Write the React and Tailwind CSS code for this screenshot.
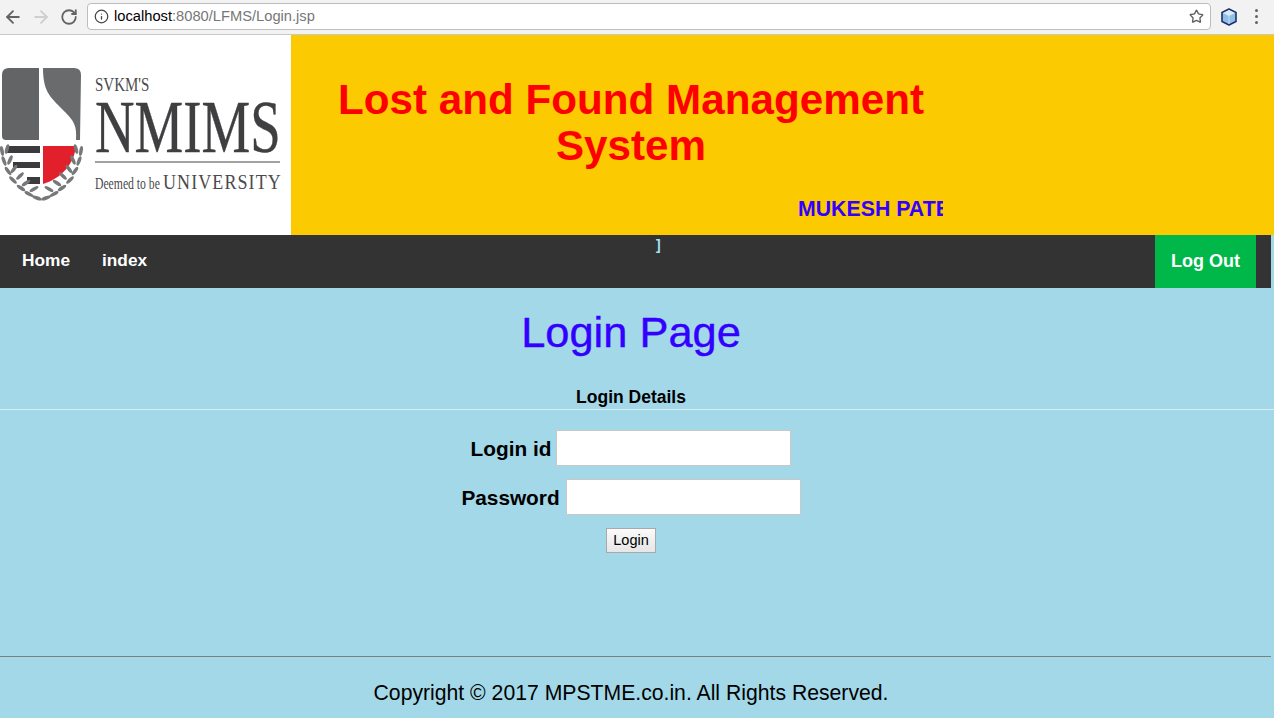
import React from "react";
import { ArrowLeft, ArrowRight, RotateCw, Info, Star } from "lucide-react";

const sans = "font-['Liberation_Sans',Arial,sans-serif]";

// laurel leaves of the crest, left side: [cx, cy, angle]
const leaves = [
  [2, 83, 80], [7, 81, 105], [4, 93, 70], [10, 92, 115], [8, 103, 55], [14, 101, 125],
  [13, 112, 45], [20, 108, 135], [21, 120, 35], [26, 115, 145], [29, 126, 28], [34, 121, 150], [37, 130, 20],
];

function Extension() {
  return (
    <svg width="18" height="18" viewBox="0 0 18 18">
      <path d="M9 1 16 4.5v9L9 17 2 13.5v-9z" fill="#8fbfe6" stroke="#1f2f6b" strokeWidth="1.6" strokeLinejoin="round" />
      <path d="M3 5 9 8l6-3-6-3z" fill="#d8ecf8" />
      <path d="M9 8v8" stroke="#c4ddf0" strokeWidth="1" />
    </svg>
  );
}

function Shield() {
  return (
    <svg width="86" height="134" viewBox="0 0 86 134" className="mt-[33px] shrink-0">
      <path d="M2 7Q2 0 9 0H39V72H6Q2 72 2 68z" fill="#636466" />
      <path d="M43 0H74Q81 0 81 7L80 72H76C77 58 74 53 65 44 52 30 43 26 43 0z" fill="#6a6b6d" />
      <path d="M7 78H40V85H7zM13 94H40V100H13zM27 109H40V116H27z" fill="#3b3b3d" />
      <path d="M43 78H76C74 96 62 110 43 116z" fill="#e2202c" />
      <g fill="#77787a">
        {leaves.map(([x, y, a], i) => (
          <g key={i}>
            <ellipse cx={x} cy={y} rx="5" ry="1.8" transform={`rotate(${a} ${x} ${y})`} />
            <ellipse cx={83 - x} cy={y} rx="5" ry="1.8" transform={`rotate(${-a} ${83 - x} ${y})`} />
          </g>
        ))}
      </g>
    </svg>
  );
}

function Logo() {
  return (
    <div className="flex h-full w-[291px] shrink-0 items-start bg-white">
      <Shield />
      <div className="ml-[9px] flex w-[186px] flex-col pt-[40px] font-['Liberation_Serif',serif] text-[#4a4a4c]">
        <span className="origin-left scale-x-[0.79] whitespace-nowrap text-[19px] leading-[20px]">SVKM'S</span>
        <span className="mt-[4px] origin-left scale-x-[0.73] whitespace-nowrap text-[75px] leading-[56px] text-[#3f3f41] [-webkit-text-stroke:0.4px_#3f3f41]">NMIMS</span>
        <div className="mt-[6px] h-[2px] w-[185px] bg-[#a0a1a3]" />
        <div className="mt-[9px] flex items-baseline whitespace-nowrap">
          <span className="w-[68px] origin-left scale-x-[0.73] text-[16px] leading-[20px]">Deemed to be</span>
          <span className="origin-left scale-x-[0.9] text-[20px] leading-[20px] tracking-[1.2px]">UNIVERSITY</span>
        </div>
      </div>
    </div>
  );
}

function Field({ label, gap }) {
  return (
    <div className={`flex items-center justify-center ${gap}`}>
      <label className="text-[20.8px] font-bold leading-[23px] text-black">{label}</label>
      <input className="h-[36px] w-[235px] border border-[#c8c8c8] bg-white outline-none" />
    </div>
  );
}

export default function App() {
  return (
    <div className={`flex h-[718px] w-[1274px] flex-col overflow-hidden bg-[#a3d8e9] ${sans}`}>
      {/* browser toolbar */}
      <div className="flex h-[35px] shrink-0 items-center border-b border-[#c9c9c9] bg-[#f2f2f2] pb-[1px] pl-[3px]">
        <ArrowLeft size={20} strokeWidth={2.2} className="text-[#636363]" />
        <ArrowRight size={20} strokeWidth={2.2} className="ml-[8px] text-[#cfcfcf]" />
        <RotateCw size={18} strokeWidth={2.4} className="ml-[9px] text-[#636363]" />
        <div className="ml-[9px] flex h-[27px] w-[1124px] items-center rounded-[4px] border border-[#bdbdbd] bg-white pl-[6px] pr-[6px]">
          <Info size={15} strokeWidth={2} className="text-[#444444]" />
          <span className="ml-[5px] text-[14.7px] text-black">localhost<span className="text-[#777777]">:8080/LFMS/Login.jsp</span></span>
          <Star size={15} strokeWidth={2.2} className="ml-auto text-[#5f5f5f]" />
        </div>
        <div className="ml-[9px]"><Extension /></div>
        <div className="ml-[17px] flex flex-col gap-[3px]">
          <span className="h-[3px] w-[3px] rounded-full bg-[#636363]" />
          <span className="h-[3px] w-[3px] rounded-full bg-[#636363]" />
          <span className="h-[3px] w-[3px] rounded-full bg-[#636363]" />
        </div>
      </div>

      {/* banner */}
      <header className="flex h-[200px] shrink-0 bg-[#fbca00]">
        <Logo />
        <div className="flex w-[680px] flex-col">
          <h1 className="mt-[42px] w-[680px] text-center text-[42.2px] font-bold leading-[46px] text-[#ff0000]">
            Lost and Found Management System
          </h1>
          <div className="ml-[507px] mt-[28px] w-[145px] overflow-hidden whitespace-nowrap text-[21.3px] font-bold leading-[25px] text-[#3300ff]">
            MUKESH PATEL
          </div>
        </div>
      </header>

      {/* nav */}
      <nav className="relative flex h-[53px] w-[1271px] shrink-0 items-center bg-[#333333] text-[17.3px] font-bold text-white">
        <a className="ml-[22px] pb-[1px]">Home</a>
        <a className="ml-[32px] pb-[1px]">index</a>
        <span className="absolute left-[656px] top-[0px] text-[14px] leading-[20px] font-bold text-[#a8e4f5]">]</span>
        <a className="ml-auto mr-[15px] flex h-full w-[101px] items-center justify-center bg-[#00b84a] pb-[1px] text-[18px]">Log Out</a>
      </nav>

      {/* content */}
      <main className="flex grow flex-col">
        <h2 className="mt-[20px] pr-[12px] text-center text-[43.4px] font-normal leading-[48px] text-[#3300ff] [-webkit-text-stroke:0.4px_#3300ff]">Login Page</h2>
        <h3 className="mt-[31px] pr-[12px] text-center text-[17.5px] font-bold leading-[20px] text-black">Login Details</h3>
        <div className="mt-[2px] h-[1px] bg-[#d9ecf2]" />
        <form className="mt-[20px] flex flex-col pr-[12px]">
          <Field label="Login id" gap="gap-[5px]" />
          <div className="mt-[13px]"><Field label="Password" gap="gap-[6px]" /></div>
          <button type="button" className="mx-auto mt-[13px] h-[25px] w-[50px] border border-[#a9a9a9] bg-gradient-to-b from-[#fafafa] to-[#e6e6e6] text-[14.5px] text-black">
            Login
          </button>
        </form>
      </main>

      <footer className="h-[62px] shrink-0">
        <div className="h-[1px] w-[1271px] bg-[#7f7f7f]" />
        <p className="mt-[24px] pr-[12px] text-center text-[21.2px] leading-[24px] text-black">Copyright © 2017 MPSTME.co.in. All Rights Reserved.</p>
      </footer>
    </div>
  );
}
